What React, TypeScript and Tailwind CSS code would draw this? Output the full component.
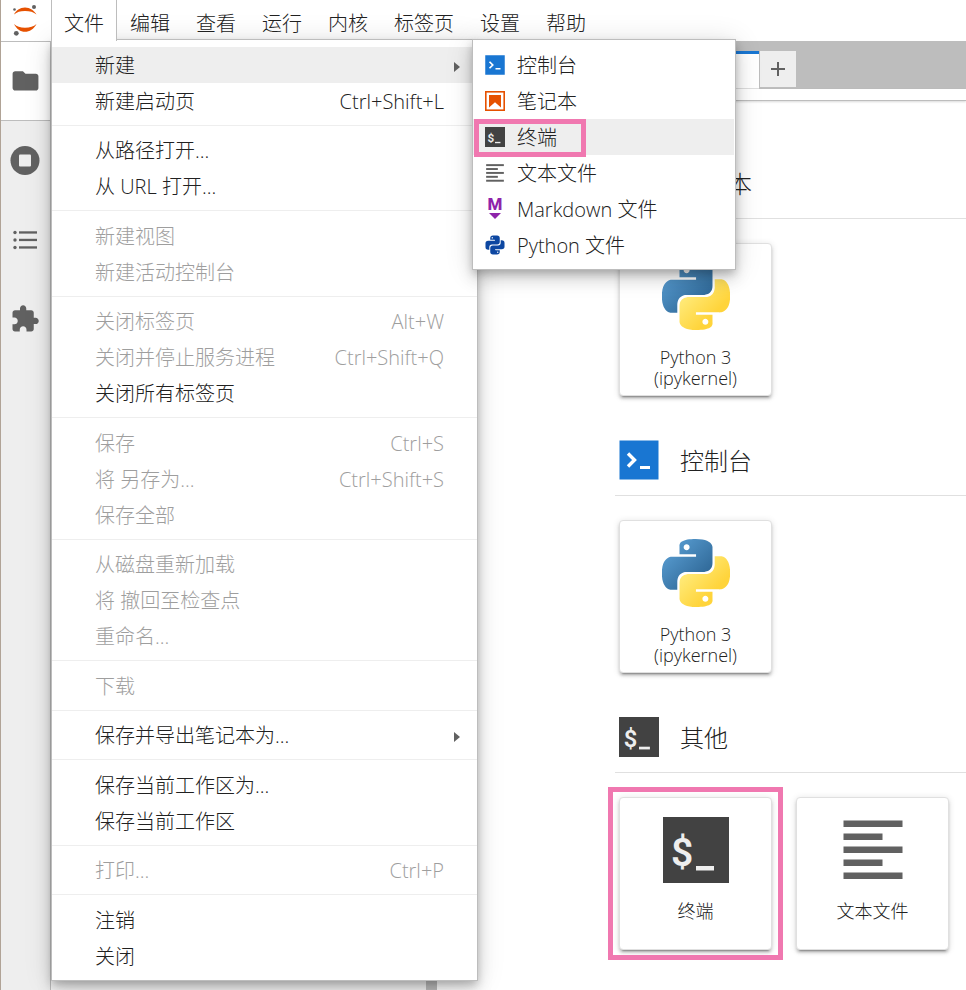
import React from "react";

type Entry = {
  label: string;
  keys?: string;
  disabled?: boolean;
  active?: boolean;
  submenu?: boolean;
};

const menuBar = ["文件", "编辑", "查看", "运行", "内核", "标签页", "设置", "帮助"];

const fileMenu: Entry[][] = [
  [
    { label: "新建", submenu: true, active: true },
    { label: "新建启动页", keys: "Ctrl+Shift+L" },
  ],
  [{ label: "从路径打开..." }, { label: "从 URL 打开..." }],
  [
    { label: "新建视图", disabled: true },
    { label: "新建活动控制台", disabled: true },
  ],
  [
    { label: "关闭标签页", keys: "Alt+W", disabled: true },
    { label: "关闭并停止服务进程", keys: "Ctrl+Shift+Q", disabled: true },
    { label: "关闭所有标签页" },
  ],
  [
    { label: "保存", keys: "Ctrl+S", disabled: true },
    { label: "将 另存为...", keys: "Ctrl+Shift+S", disabled: true },
    { label: "保存全部", disabled: true },
  ],
  [
    { label: "从磁盘重新加载", disabled: true },
    { label: "将 撤回至检查点", disabled: true },
    { label: "重命名...", disabled: true },
  ],
  [{ label: "下载", disabled: true }],
  [{ label: "保存并导出笔记本为...", submenu: true }],
  [{ label: "保存当前工作区为..." }, { label: "保存当前工作区" }],
  [{ label: "打印...", keys: "Ctrl+P", disabled: true }],
  [{ label: "注销" }, { label: "关闭" }],
];

function JupyterLogo() {
  return (
    <svg viewBox="0 0 50 41" className="h-[41px] w-[50px]" aria-hidden="true">
      <path d="M13 14.500C15 10.500 19 7.500 24 7.500S33 10.500 35.500 14.500C32.500 12 29 11 24 11S16 12 13 14.500Z" fill="#e65100" />
      <path d="M13 24C15.500 29 19.500 31.800 24 31.800S33 29 35.500 24C32.500 26.500 29 27.800 24 27.800S16 26.500 13 24Z" fill="#e65100" />
      <circle cx="33" cy="7" r="2" fill="#616161" />
      <circle cx="13.500" cy="9.500" r="1.300" fill="#616161" />
      <circle cx="15.300" cy="33.300" r="2.400" fill="#616161" />
    </svg>
  );
}

function FolderIcon() {
  return (
    <svg viewBox="0 0 24 24" className="size-[31px]" fill="#616161" aria-hidden="true">
      <path d="M10 4H4c-1.100 0-1.990.9-1.990 2L2 17c0 1.100.9 2 2 2h16c1.100 0 2-.9 2-2V8c0-1.100-.9-2-2-2h-8l-2-2z" />
    </svg>
  );
}

function RunningIcon() {
  return (
    <svg viewBox="0 0 32 32" className="size-8" aria-hidden="true">
      <circle cx="16" cy="15.500" r="14.500" fill="#616161" />
      <rect x="10" y="9.500" width="12" height="12" rx="1" fill="#eeeeee" />
    </svg>
  );
}

function ListIcon() {
  return (
    <svg viewBox="0 0 24 20" className="h-5 w-6" fill="#616161" aria-hidden="true">
      <circle cx="2" cy="2.500" r="1.700" />
      <circle cx="2" cy="10" r="1.700" />
      <circle cx="2" cy="17.500" r="1.700" />
      <rect x="6" y="1.300" width="18" height="2.300" />
      <rect x="6" y="8.800" width="18" height="2.300" />
      <rect x="6" y="16.300" width="18" height="2.300" />
    </svg>
  );
}

function PuzzleIcon() {
  return (
    <svg viewBox="0 0 24 24" className="size-[30px]" fill="#616161" aria-hidden="true">
      <path d="M20.5 11H19V7c0-1.100-.9-2-2-2h-4V3.500C13 2.120 11.880 1 10.500 1S8 2.120 8 3.500V5H4c-1.100 0-1.990.9-1.990 2v3.800H3.500c1.490 0 2.700 1.210 2.700 2.700s-1.210 2.700-2.700 2.700H2V20c0 1.100.9 2 2 2h3.800v-1.500c0-1.490 1.210-2.700 2.700-2.700 1.490 0 2.700 1.210 2.700 2.700V22H17c1.100 0 2-.9 2-2v-4h1.500c1.380 0 2.500-1.120 2.500-2.500S21.880 11 20.500 11z" />
    </svg>
  );
}

function ConsoleIcon({ className }: { className: string }) {
  return (
    <svg viewBox="0 0 40 40" className={className} aria-hidden="true">
      <rect x="0.500" y="0.500" width="39" height="39" fill="#1976d2" />
      <path d="M9 13.500l6.500 6.500L9 26.500" fill="none" stroke="#fff" strokeWidth="3.400" />
      <rect x="21" y="26" width="10" height="3" fill="#fff" />
    </svg>
  );
}

function NotebookIcon({ className }: { className: string }) {
  return (
    <svg viewBox="0 0 20 20" className={className} aria-hidden="true">
      <rect x="0.800" y="0.800" width="18.400" height="18.400" fill="#fff" stroke="#e65100" strokeWidth="1.600" />
      <path d="M4 4h12v12.500l-6-5.300-6 5.300z" fill="#e65100" />
    </svg>
  );
}

function TerminalIcon({ className }: { className: string }) {
  return (
    <svg viewBox="0 0 66 66" className={className} aria-hidden="true">
      <rect width="66" height="66" fill="#424242" />
      <text x="8" y="49" fontFamily="Roboto, sans-serif" fontSize="39" fontWeight="600" fill="#eeeeee">
        $
      </text>
      <rect x="33" y="49" width="18" height="4.500" fill="#eeeeee" />
    </svg>
  );
}

function TextIcon({ className }: { className: string }) {
  return (
    <svg viewBox="0 0 60 60" className={className} fill="#616161" aria-hidden="true">
      <rect x="0.500" y="0.500" width="59" height="6.500" />
      <rect x="0.500" y="13.500" width="39" height="6.500" />
      <rect x="0.500" y="26.500" width="59" height="6.500" />
      <rect x="0.500" y="39.500" width="39" height="6.500" />
      <rect x="0.500" y="52.500" width="59" height="6.500" />
    </svg>
  );
}

function MarkdownIcon() {
  return (
    <svg viewBox="0 0 20 24" className="h-6 w-5 overflow-visible" fill="#8e24aa" aria-hidden="true">
      <text x="10" y="13" textAnchor="middle" fontFamily="Roboto, sans-serif" fontSize="17" fontWeight="800">
        M
      </text>
      <path d="M4 16h12l-6 6z" />
    </svg>
  );
}

function PythonFileIcon() {
  return (
    <svg viewBox="2 2 20 21" className="size-5" fill="#0d47a1" aria-hidden="true">
      <path d="M19.140 7.500A2.860 2.860 0 0 1 22 10.360v3.780A2.860 2.860 0 0 1 19.140 17H12c0 .39.320.96.710.96H17v1.680a2.860 2.860 0 0 1-2.860 2.860H9.860A2.860 2.860 0 0 1 7 19.640v-3.750a2.850 2.850 0 0 1 2.860-2.850h5.250a2.850 2.850 0 0 0 2.850-2.860V7.500h1.180m-4.280 11.790c-.4 0-.72.3-.72.89 0 .59.320.71.720.71a.71.71 0 0 0 .71-.71c0-.59-.32-.89-.71-.89m-10-1.790A2.860 2.860 0 0 1 2 14.640v-3.780A2.860 2.860 0 0 1 4.860 8H12c0-.39-.32-.96-.71-.96H7V5.360A2.860 2.860 0 0 1 9.860 2.500h4.280A2.860 2.860 0 0 1 17 5.360v3.750a2.850 2.850 0 0 1-2.860 2.850H8.890a2.850 2.850 0 0 0-2.850 2.860v2.680H4.860M9.140 5.710c.4 0 .72-.3.720-.89 0-.59-.32-.71-.72-.71-.39 0-.71.120-.71.710s.32.890.710.890z" />
    </svg>
  );
}

function PythonLogo() {
  const id = React.useId();
  return (
    <svg viewBox="0 0 24 24" className="size-[68px]" aria-hidden="true">
      <defs>
        <linearGradient id={`${id}b`} x1="0" y1="0" x2="1" y2="1">
          <stop offset="0.1" stopColor="#5a9fd4" />
          <stop offset="0.8" stopColor="#306998" />
        </linearGradient>
        <linearGradient id={`${id}y`} x1="0.2" y1="0.2" x2="0.8" y2="0.8">
          <stop offset="0.1" stopColor="#ffe873" />
          <stop offset="0.8" stopColor="#ffd43b" />
        </linearGradient>
      </defs>
      <path
        fill={`url(#${id}b)`}
        d="M14.25.18l.9.2.73.26.59.3.45.32.34.34.25.34.16.33.1.3.04.26.02.2-.01.13V8.5l-.05.63-.13.55-.21.46-.26.38-.3.31-.33.25-.35.19-.35.14-.33.1-.3.07-.26.04-.21.02H8.77l-.69.05-.59.14-.5.22-.41.27-.33.32-.27.35-.2.36-.15.37-.1.35-.07.32-.04.27-.02.21v3.06H3.17l-.21-.03-.28-.07-.32-.12-.35-.18-.36-.26-.36-.36-.35-.46-.32-.59-.28-.73-.21-.88-.14-1.05-.05-1.23.06-1.22.16-1.04.24-.87.32-.71.36-.57.4-.44.42-.33.42-.24.4-.16.36-.1.32-.05.24-.01h.16l.06.01h8.16v-.83H6.18l-.01-2.75-.02-.37.05-.34.11-.31.17-.28.25-.26.31-.23.38-.2.44-.18.51-.15.58-.12.64-.1.71-.06.77-.04.84-.02 1.27.05zm-6.3 1.98l-.23.33-.08.41.08.41.23.34.33.22.41.09.41-.09.33-.22.23-.34.08-.41-.08-.41-.23-.33-.33-.22-.41-.09-.41.09z"
      />
      <path
        fill={`url(#${id}y)`}
        d="M21.04 6.11l.28.06.32.12.35.18.36.27.36.35.35.47.32.59.28.73.21.88.14 1.04.05 1.23-.06 1.23-.16 1.04-.24.86-.32.71-.36.57-.4.45-.42.33-.42.24-.4.16-.36.09-.32.05-.24.02-.16-.01h-8.22v.82h5.84l.01 2.76.02.36-.05.34-.11.31-.17.29-.25.25-.31.24-.38.2-.44.17-.51.15-.58.13-.64.09-.71.07-.77.04-.84.01-1.27-.04-1.07-.14-.9-.2-.73-.25-.59-.3-.45-.33-.34-.34-.25-.34-.16-.33-.1-.3-.04-.25-.02-.2.01-.13v-5.34l.05-.64.13-.54.21-.46.26-.38.3-.32.33-.24.35-.2.35-.14.33-.1.3-.06.26-.04.21-.02.13-.01h5.84l.69-.05.59-.14.5-.21.41-.28.33-.32.27-.35.2-.36.15-.36.1-.35.07-.32.04-.28.02-.21V6.07h2.09l.14.01zm-6.47 14.25l-.23.33-.08.41.08.41.23.33.33.23.41.08.41-.08.33-.23.23-.33.08-.41-.08-.41-.23-.33-.33-.23-.41-.08-.41.08z"
      />
    </svg>
  );
}

function FileMenu() {
  return (
    <div
      role="menu"
      aria-label="文件"
      className="absolute top-[39px] left-[50px] z-10 w-[427px] border border-[#bdbdbd] bg-white pt-[7px] shadow-[0_4px_8px_-1px_rgba(0,0,0,0.2),0_9px_15px_0_rgba(0,0,0,0.14),0_2px_27px_0_rgba(0,0,0,0.12)]"
    >
      {fileMenu.map((group, i) => (
        <div
          key={i}
          role="group"
          className="border-t border-[#eeeeee] py-1.5 first:border-t-0 first:pt-0! odd:pt-[7px]"
        >
          {group.map((e) => (
            <button
              key={e.label}
              type="button"
              role="menuitem"
              disabled={e.disabled}
              className={`flex h-9 w-full items-center justify-between pt-0.5 pl-[43px] text-left ${
                e.active ? "bg-[#eeeeee]" : ""
              } ${e.disabled ? "text-[#9e9e9e]" : "text-[#212121]"}`}
            >
              <span>{e.label}</span>
              {e.keys && <span className="pr-[33px]">{e.keys}</span>}
              {e.submenu && (
                <svg viewBox="0 0 6 10" className="mt-px mr-[17px] h-2.5 w-1.5" fill="#616161" aria-hidden="true">
                  <path d="M0 0l6 5-6 5z" />
                </svg>
              )}
            </button>
          ))}
        </div>
      ))}
    </div>
  );
}

const newMenu = [
  { label: "控制台", icon: <ConsoleIcon className="size-5" /> },
  { label: "笔记本", icon: <NotebookIcon className="size-5" /> },
  { label: "终端", icon: <TerminalIcon className="size-5" />, active: true },
  { label: "文本文件", icon: <TextIcon className="size-[18px]" /> },
  { label: "Markdown 文件", icon: <MarkdownIcon /> },
  { label: "Python 文件", icon: <PythonFileIcon /> },
];

function NewMenu() {
  return (
    <div
      role="menu"
      aria-label="新建"
      className="absolute top-[39px] left-[471px] z-20 w-[264px] border border-[#bdbdbd] bg-white pt-[7px] pr-px pb-1.5 shadow-[0_4px_8px_-1px_rgba(0,0,0,0.2),0_9px_15px_0_rgba(0,0,0,0.14),0_2px_27px_0_rgba(0,0,0,0.12)]"
    >
      {newMenu.map((e) => (
        <button
          key={e.label}
          type="button"
          role="menuitem"
          className={`relative flex h-9 w-full items-center gap-3 pl-3 text-left ${e.active ? "bg-[#eeeeee]" : ""}`}
        >
          <span className="flex w-5 justify-center">{e.icon}</span>
          <span className="pt-0.5">{e.label}</span>
          {e.active && <span className="absolute top-0 left-px h-[38px] w-28 border-5 border-[#f078b0]" />}
        </button>
      ))}
    </div>
  );
}

function Card({ icon, lines, marked }: { icon: React.ReactNode; lines: string[]; marked?: boolean }) {
  return (
    <button
      type="button"
      className="relative flex h-[153px] w-[153px] shrink-0 flex-col items-center rounded-sm border border-[#e0e0e0] bg-white text-lg leading-[21px] shadow-[0_4px_2px_-3px_rgba(0,0,0,0.35),0_3px_3px_0_rgba(0,0,0,0.16),0_1px_7px_0_rgba(0,0,0,0.12)]"
    >
      <span className="flex h-[103px] items-center">{icon}</span>
      {lines.map((line) => (
        <span key={line} className="block h-[21px]">
          {line}
        </span>
      ))}
      {marked && <span className="absolute -inset-x-3 -inset-y-[11px] border-5 border-[#f078b0]" />}
    </button>
  );
}

function Section({ icon, title, children }: { icon: React.ReactNode; title: string; children: React.ReactNode }) {
  return (
    <section className="mb-11">
      <h2 className="flex h-14 items-start gap-[21px] border-b border-[#e0e0e0] pl-1 text-2xl leading-[42px]">
        {icon}
        {title}
      </h2>
      <div className="mt-6 flex h-[153px] gap-6 pl-1">{children}</div>
    </section>
  );
}

export default function App() {
  return (
    <div className="relative flex h-screen min-h-[600px] flex-col overflow-hidden border-l border-[#b0a396] bg-white font-['Open_Sans','Noto_Sans_CJK_SC',sans-serif] text-xl font-light text-[#212121]">
      <header className="flex h-[42px] shrink-0 border-b border-[#bdbdbd]">
        <div className="w-[50px] shrink-0">
          <JupyterLogo />
        </div>
        <nav className="flex" aria-label="菜单栏">
          {menuBar.map((label, i) => (
            <button
              key={label}
              type="button"
              className={
                i === 0
                  ? "relative z-20 h-[41px] border-r border-l border-[#bdbdbd] bg-white px-3 pt-1.5 whitespace-nowrap"
                  : "h-[41px] px-[13px] pt-1.5 whitespace-nowrap"
              }
            >
              {label}
            </button>
          ))}
        </nav>
      </header>

      <div className="flex min-h-0 flex-1">
        <aside className="flex w-[50px] shrink-0 flex-col border-r border-[#bdbdbd] bg-[#eeeeee]">
          <button type="button" aria-label="文件浏览器" className="flex h-[79px] items-center justify-center border-b border-[#bdbdbd] bg-white pr-px">
            <FolderIcon />
          </button>
          <button type="button" aria-label="运行的终端和内核" className="flex h-[79px] items-center justify-center pr-px">
            <RunningIcon />
          </button>
          <button type="button" aria-label="目录" className="flex h-[79px] items-center justify-center pr-px">
            <ListIcon />
          </button>
          <button type="button" aria-label="扩展" className="flex h-[79px] items-center justify-center pr-px">
            <PuzzleIcon />
          </button>
        </aside>

        <div className="flex w-[386px] shrink-0 justify-end bg-[#f5f5f5]">
          <div className="w-[11px] bg-[#bdbdbd]" />
        </div>

        <main className="flex min-w-0 flex-1 flex-col">
          <div className="flex h-[47px] shrink-0 items-end bg-[#bdbdbd]">
            <div className="mr-px h-[38px] w-[322px] border-t-3 border-b border-t-[#1976d2] border-b-[#e0e0e0] bg-white" />
            <button type="button" aria-label="新建启动页" className="mb-[2px] flex size-9 items-center justify-center bg-[#eeeeee]">
              <svg viewBox="0 0 14 14" className="size-3.5" stroke="#616161" strokeWidth="2" aria-hidden="true">
                <path d="M7 0v14M0 7h14" />
              </svg>
            </button>
          </div>
          <div className="h-3 shrink-0 border-b border-[#bdbdbd] shadow-[0_1px_2px_0_rgba(0,0,0,0.15)]" />
          <div className="min-h-0 flex-1 overflow-hidden pt-[62px] pl-[178px]">
            <Section icon={<NotebookIcon className="size-10" />} title="笔记本">
              <Card icon={<PythonLogo />} lines={["Python 3", "(ipykernel)"]} />
            </Section>
            <Section icon={<ConsoleIcon className="size-10" />} title="控制台">
              <Card icon={<PythonLogo />} lines={["Python 3", "(ipykernel)"]} />
            </Section>
            <Section icon={<TerminalIcon className="size-10" />} title="其他">
              <Card icon={<TerminalIcon className="size-[66px]" />} lines={["终端"]} marked />
              <Card icon={<TextIcon className="size-[60px]" />} lines={["文本文件"]} />
            </Section>
          </div>
        </main>
      </div>

      <FileMenu />
      <NewMenu />
    </div>
  );
}
